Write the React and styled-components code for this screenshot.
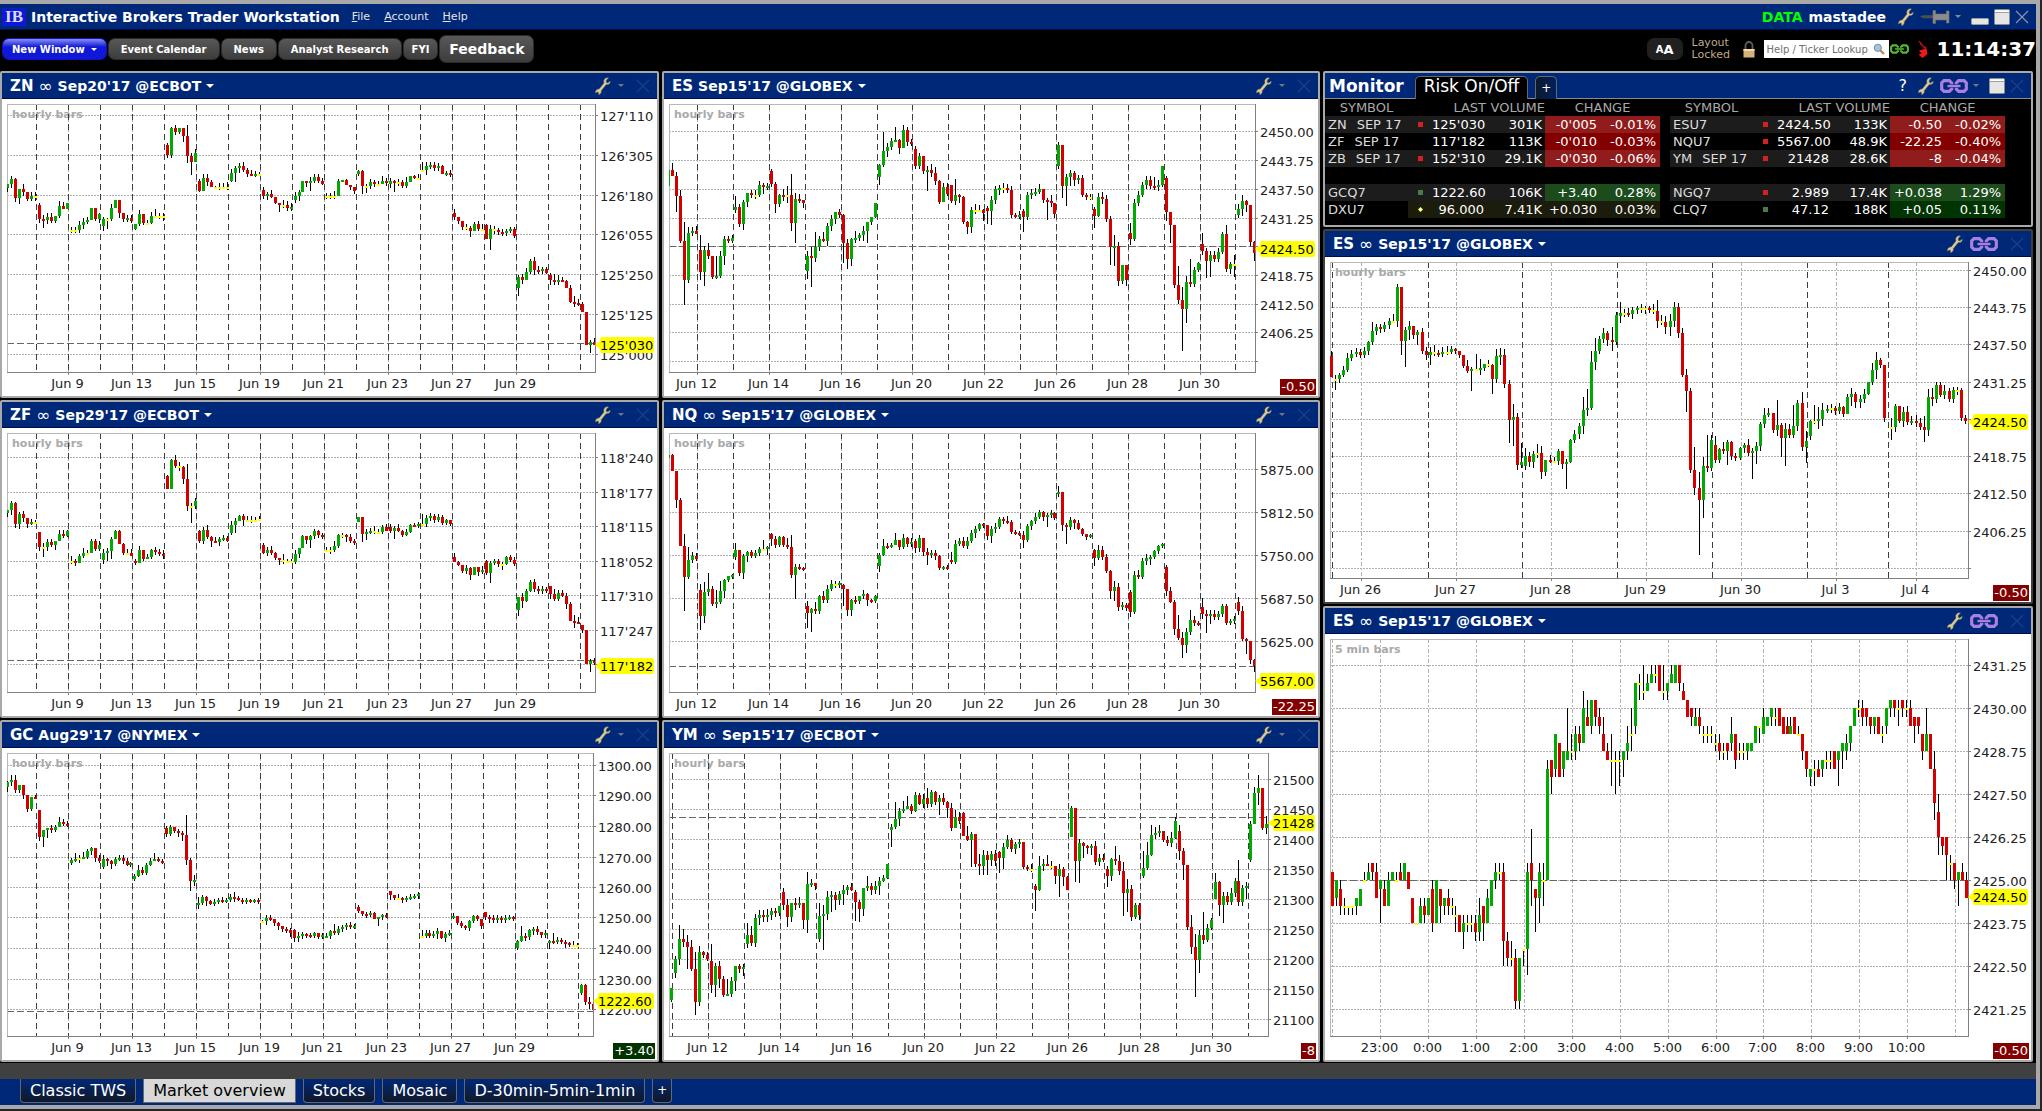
import React, { useLayoutEffect, useRef, useState } from 'react';
import styled, { createGlobalStyle, css } from 'styled-components';

const NAVY = '#002878';
const FRAME = '#a9a9a9';
const FONT = "'DejaVu Sans', Verdana, sans-serif";

const GlobalStyle = createGlobalStyle`
  * {
    box-sizing: border-box;
  }

  body {
    margin: 0;
    background: #262626;
    color: white;
    font-family: ${FONT};
    font-size: 13px;
  }

  button, input {
    font-family: inherit;
  }
`;

/* ---------- candle data ---------- */

// One string per session: the opening level, then "close.wicks" for each bar.
// Levels grow downwards; the two wick digits are upper and lower length.
const ZN = [
  '565 552.04 537.34 594.14 567.06 577.54 597.02 590.42 590.45',
  '615 657.24 662.48 652.44 663.42 648.02 618.52 629.40 610.00',
  '692 692.33 692.33 675.43 666.44 662.32 625.00 657.02 642.14',
  '680 658.25 658.1a 625.42 600.00 640.05 658.03 655.33 664.32',
  '688 674.01 642.42 670.02 670.32 650.41 650.72 648.33 650.35',
  '437 465.23 384.13 398.33 384.02 408.06 470.b7 486.3d 461.40',
  '543 575.21 535.40 547.44 562.20 562.12 562.43 562.42 564.52',
  '543 519.41 504.29 498.35 512.42 522.23 527.40 522.32 522.20',
  '570 590.33 583.24 592.41 610.01 616.07 616.53 626.43 622.43',
  '602 590.43 576.25 543.00 549.04 545.48 533.32 543.32 553.31',
  '588 588.33 590.33 588.53 545.20 542.00 555.10 562.03 575.03',
  '522 513.12 560.18 558.27 548.33 553.23 553.32 543.50 549.33',
  '553 543.34 549.19 548.33 558.22 547.52 528.00 534.11 534.42',
  '512 512.81 500.45 495.33 506.33 498.33 524.10 519.22 526.32',
  '640 652.43 664.03 682.03 684.32 695.26 673.20 687.32 689.50',
  '675 719.10 688.4b 690.34 697.23 700.33 694.23 688.22 710.22',
  '866 833.28 840.34 817.40 785.22 810.45 815.43 809.23 819.21',
  '825 840.25 847.63 840.53 844.31 865.10 907.31 911.64 914.42',
  '912 937.20 1035.00 1026.28 1035.40',
];

const ZF = [
  '400 390.04 370.25 434.14 402.25 414.34 433.04 426.31 427.22',
  '457 502.04 503.4a 487.34 497.32 485.05 462.40 468.42 453.11',
  '545 545.53 549.23 528.20 519.52 520.32 483.20 507.22 496.42',
  '540 520.44 514.38 477.28 455.10 493.10 519.12 520.42 528.40',
  '543 549.22 510.40 537.02 531.30 510.12 517.33 523.32 528.43',
  '290 327.10 240.10 260.52 261.44 298.15 378.f5 380.3h 364.33',
  '453 483.12 450.33 473.52 483.16 488.41 478.24 474.32 485.21',
  '460 435.42 423.38 408.10 420.26 421.40 422.43 420.31 418.31',
  '497 519.21 511.33 519.42 536.12 541.05 543.63 543.21 543.22',
  '547 522.42 505.04 468.10 480.04 469.18 455.23 465.13 472.22',
  '512 512.32 512.34 500.52 465.12 467.23 473.15 483.32 489.22',
  '428 411.00 463.08 457.36 454.32 456.52 457.32 442.22 455.30',
  '442 453.32 444.28 454.41 467.12 456.31 437.11 440.21 433.22',
  '433 433.a2 415.33 410.33 421.23 411.32 430.22 421.12 432.02',
  '532 547.40 556.11 574.02 564.33 586.15 562.00 577.04 570.42',
  '543 580.12 551.2a 544.22 553.23 553.26 532.11 540.22 553.32',
  '690 652.06 663.47 635.21 608.21 629.33 633.33 628.33 633.22',
  '618 643.05 659.52 640.32 649.31 672.35 725.20 728.66 731.51',
  '735 752.03 852.00 844.28 850.32',
];

const GC = [
  '215 200.15 195.54 225.53 209.03 240.04 282.03 246.02 251.20',
  '285 366.04 345.0a 340.08 345.33 336.22 320.50 326.33 333.31',
  '444 436.22 432.62 430.34 426.51 410.22 399.14 430.04 438.32',
  '457 432.42 440.15 447.15 434.22 430.32 439.33 452.31 445.12',
  '492 483.22 465.51 474.32 452.22 438.31 434.60 440.21 443.22',
  '340 357.23 336.22 348.02 354.24 360.26 435.k5 500.2a 495.55',
  '570 564.64 548.22 558.15 567.11 562.32 555.22 560.32 555.22',
  '555 546.32 551.54 556.21 561.22 556.22 560.12 555.12 563.22',
  '618 618.11 609.34 614.32 625.03 634.14 642.03 646.23 655.24',
  '645 669.14 664.44 657.23 662.13 665.22 655.12 667.02 661.22',
  '671 665.30 648.13 654.72 643.32 638.23 632.23 637.32 633.22',
  '578 590.22 597.02 601.23 595.22 614.10 607.07 601.13 606.21',
  '528 540.05 550.02 551.42 555.13 551.22 548.32 544.22 538.23',
  '665 665.61 655.32 664.32 659.32 648.35 671.01 658.24 655.32',
  '609 603.31 624.02 635.22 641.12 620.13 603.12 613.12 633.03',
  '592 607.03 611.25 615.33 610.33 616.23 611.33 606.22 614.12',
  '700 678.12 664.a1 668.34 647.13 643.25 653.33 660.03 654.33',
  '685 678.16 682.82 676.32 681.22 685.25 692.12 690.42 691.20',
  '837 813.12 863.13 868.55 887.25',
];

const ES = [
  '380 330.00 350.70 408.4g 543.62 660.jp 521.63 514.43 522.50',
  '570 638.f8 570.4e 590.73 653.02 650.k2 588.52 538.39 543.32 535.32',
  '450 441.b3 492.33 427.26 400.05 405.33 405.54 377.42 381.27 378.33',
  '333 374.23 432.29 405.13 409.65 407.97 490.l8 417.6k 420.53 429.05',
  '635 590.58 596.9t 563.f4 537.34 545.71 500.35 477.45 457.05 467.33',
  '465 550.1k 597.4a 537.17 534.74 525.23 515.56 487.0c 472.03 430.01',
  '353 315.18 273.j2 262.46 243.33 240.d1 265.16 211.50 248.34 253.32',
  '267 319.33 288.33 335.03 331.4k 339.64 364.64 428.12 382.40 404.42',
  '377 425.02 405.g4 412.16 486.12 501.17 450.36 450.64 451.52 459.18',
  '444 453.2d 420.4e 388.34 384.36 386.55 391.43 465.43 472.21 466.42',
  '453 471.2f 405.33 400.44 396.43 388.52 421.03 424.2j 430.64 464.04',
  '320 257.33 380.0c 352.3k 341.39 360.26 356.34 405.32 411.23 412.33',
  '447 468.2c 413.41 418.55 478.43 563.3i 558.bj 665.45 617.03 660.06',
  '520 538.a6 430.42 405.43 375.32 360.44 378.43 382.93 377.54 319.02',
  '355 456.29 495.0i 677.03 721.j4 748.dG 667.6e 674.n3 630.33 610.12',
  '552 574.b4 605.3h 585.4g 597.43 578.43 522.22 627.93 612.25 612.9d',
  '467 447.53 423.67 435.17 548.04 580.18',
];

const NQ = [
  '190 180.00 230.10 315.08 455.20 548.cy 495.d2 485.43 493.32',
  '587 663.6e 593.a7 583.g4 627.32 622.c4 588.a2 557.17 543.02 540.13',
  '488 465.73 536.03 485.26 472.16 483.22 475.32 462.23 463.91 458.16',
  '417 432.17 450.33 427.12 450.12 457.72 542.c3 517.3o 520.32 525.11',
  '635 654.5f 642.1j 648.73 605.13 615.53 583.43 568.42 570.33 565.23',
  '572 583.1h 647.06 615.16 620.43 603.03 597.43 615.16 620.12 603.12',
  '513 480.26 453.71 458.32 450.21 435.70 457.03 430.42 448.13 441.43',
  '440 459.25 431.34 473.04 480.4a 475.33 484.34 521.12 516.12 522.21',
  '495 501.82 447.42 438.32 453.42 440.43 416.32 404.35 388.12 395.12',
  '390 423.04 403.37 398.44 372.22 378.23 382.52 412.22 416.22 419.22',
  '421 435.48 395.22 378.14 367.43 353.22 368.14 362.2a 354.33 370.12',
  '297 291.63 390.06 396.2h 375.33 384.16 402.31 419.12 427.03 421.11',
  '465 491.18 465.52 487.43 530.32 588.18 577.6a 636.44 632.33 640.23',
  '593 652.25 540.42 546.52 500.32 491.44 486.27 470.12 454.13 447.12',
  '518 590.25 622.41 703.26 731.e2 752.6d 713.48 675.a3 684.43 690.21',
  '638 658.95 663.4h 657.48 667.43 657.33 635.23 686.22 679.22 673.33',
  '622 649.54 733.52 740.1d 797.04 815.16',
];

const YM = [
  '857 820.02',
  '777 732.35 672.e6 682.a5 698.7m 765.72 863.id 712.64 720.13 732.32',
  '740 812.h8 755.3c 795.59 843.32 838.f1 801.43 756.0a 764.34 759.47',
  '687 662.c4 685.93 609.44 600.57 606.55 600.65 588.35 594.34 574.03',
  '532 570.45 608.6a 566.05 572.55 564.63 615.09 508.cd 504.43 513.04',
  '672 603.d3 597.9y 546.66 540.4f 556.3a 538.35 527.5b 516.25 525.41',
  '533 562.2j 582.2d 519.07 515.a3 527.35 514.54 498.49 489.31 447.01',
  '347 338.3h 312.h2 288.37 283.82 273.a0 288.23 239.31 267.21 253.54',
  '250 267.a4 230.23 261.13 248.3d 261.53 278.1a 340.53 306.70 318.53',
  '293 363.10 377.a1 357.2r 447.03 455.a9 420.59 436.4f 418.36 440.45',
  '412 429.1f 397.4b 375.52 404.23 389.25 383.34 458.02 464.22 464.53',
  '515 525.2l 455.a1 449.55 455.90 454.53 483.08 463.5l 486.29 527.10',
  '368 280.20 440.0l 384.4m 394.1c 399.16 394.27 443.53 431.44 436.42',
  '462 483.3b 432.15 438.d4 470.64 534.9n 522.aj 608.44 570.22 600.25',
  '485 459.h2 420.d2 362.a1 356.64 350.64 377.02 384.43 370.64 318.41',
  '348 410.69 450.3f 636.03 697.c7 737.dB 660.5d 677.n4 640.42 615.22',
  '552 501.90 570.1b 544.4i 562.43 535.53 498.34 563.l4 520.34 515.4b',
  '435 326.32 233.60 220.dc 340.02 327.86',
];

const ES_HOURLY = [
  '395 458.50',
  '462 462.4b 450.24 435.42 399.52 387.43 381.43 390.33 378.43 352.14 318.93 307.34 312.34 300.33 289.34 289.72 188.36 350.0e 315.3q 305.5a 330.04 322.2a 380.43 390.45',
  '390 382.5a 384.73 389.33 381.53 382.63 373.32 378.13 392.03 425.02 440.62 433.2k 435.f1 430.95 419.03 421.42 463.1f 395.74 392.79 477.64 587.4n 578.dq 722.45 712.j3',
  '725 695.84 713.45 687.36 686.94 743.77 705.04 708.52 708.42 678.24 717.05 713.3p 645.11 627.43 605.35 555.d8 550.j6 413.b2 380.d8 343.33 325.54 346.26 351.d9 272.33',
  '275 266.b7 264.44 267.53 257.35 250.24 252.44 250.25 257.23 259.63 290.b7 292.63 307.67 290.79 248.56 326.45 450.52 500.6l 735.33 790.n7 825.gT 723.9i 731.v4 645.53',
  '660 705.93 672.13 679.73 651.2e 695.14 701.33 669.12 660.25 684.63 679.3q 663.4d 597.25 570.74 564.52 616.03 601.p6 641.2j 613.6s 631.53 605.l3 534.35 668.b4 650.ag',
  '635 590.14 588.g3 583.c8 557.77 553.43 551.44 560.24 547.43 568.13 517.30 508.69 532.26 523.46 507.54 471.01 435.73 405.89 422.23 580.04',
  '608 608.9d 543.25 588.02 562.56 592.63 588.53 594.64 608.53 617.bc 517.86 522.97 480.34 512.32 498.64 524.33 495.34 496.35 581.23 590.33',
];

// open / close / high / low of every 5 minute bar, one digit each,
// counted in ticks down from 2431.25
const ES_5MIN = `
osos rpps qspt ssrt ssst ssst srrt sqqs ppop ponp nonp ornr qppu qsps spos poop
ppop opnp pnnp oqoq ruru uuuu usru stru trrt qupv uppu qsqu srrt rsqt ssrt ttsv
tvtv vutx uutv uutv uvtw vtrw susw urqu spps ponq oonp ownz wyvz yywz yDxE DyyE
xxxz xonA npjs qrqv ronu ppns pcbp bdbf c88d 9d9d caad ba5b aa8b a87b 897a 9539
6747 7448 4647 6758 8a6a ab9b bb8e bbaf bbae baad a97b 885a 7228 2214 3304 3213
2102 1102 0303 3304 3224 2102 2002 0203 3424 4646 5657 7657 6758 8879 8879 8879
998a 9a8b aa9b 9a9b 986a 8b8c aa9b aa9b a99b a99a 9779 7779 8658 7667 6557 6657
5757 6868 7868 8768 6868 8878 8a8b acad dcce ccbe cdbd cbbd bbac bbac acac baae
a99c a98b 977a 7557 5546 5647 5657 6768 7668 6868 8879 7558 5446 4546 5547 4546
5546 5747 6769 6768 8a8b a85a 8c8c cgai hkfm klkm kmkp nnmp npnq poos opnp prop
`;

const DIGITS = '0123456789abcdefghijklmnopqrstuvwxyzABCDEFGHIJKLMNOPQRSTUVWXYZ';
const digit = (c) => DIGITS.indexOf(c);

const readSessions = (sessions, first, lines, step) =>
  sessions.flatMap((session, i) => {
    const [start, ...bars] = session.split(' ');
    const x0 = i === 0 ? first : lines[i - 1] + step / 2;
    let open = Number(start);
    return bars.map((bar, k) => {
      const [value, wicks] = bar.split('.');
      const close = Number(value);
      const candle = {
        x: x0 + k * step,
        open,
        close,
        high: Math.min(open, close) - digit(wicks[0]) * 3,
        low: Math.max(open, close) + digit(wicks[1]) * 3,
      };
      open = close;
      return candle;
    });
  });

const readTicks = (text, first, step) =>
  text
    .trim()
    .split(/\s+/)
    .map((bar, i) => {
      const [open, close, high, low] = [...bar].map((c) => 197 + digit(c) * 25.8);
      return { x: first + i * step, open, close, high, low };
    });

const series = (from, step, count) =>
  Array.from({ length: count }, (_, i) => from + i * step);

const ticks = (positions, names) => positions.map((at, i) => [at, names[i] || '']);

const notes = series(69, 73.8, 18);
const indexes = series(66, 82.8, 16);
const ymLines = series(9, 83, 17);
const hourly = [6, 210, 413, 617, 820, 1024, 1197];
const JUNE_A = ['Jun 9', 'Jun 13', 'Jun 15', 'Jun 19', 'Jun 21', 'Jun 23', 'Jun 27', 'Jun 29'];
const JUNE_B = ['Jun 12', 'Jun 14', 'Jun 16', 'Jun 20', 'Jun 22', 'Jun 26', 'Jun 28', 'Jun 30'];

const CHARTS = {
  zn: {
    symbol: 'ZN', rolling: true, contract: "Sep20'17 @ECBOT", bars: 'hourly bars', axis: 62,
    width: 1358, top: 313, bottom: 1117, lines: notes,
    candles: readSessions(ZN, 0, notes, 9.22),
    xTicks: ticks(series(142.8, 147.6, 8), JUNE_A),
    yTicks: ticks([347, 466, 586, 704, 823, 943, 1063], ["127'110", "126'305", "126'180", "126'055", "125'250", "125'125", "125'000"]),
    previous: 1031, last: 1035, price: "125'030",
  },
  zf: {
    symbol: 'ZF', rolling: true, contract: "Sep29'17 @ECBOT", bars: 'hourly bars', axis: 62,
    width: 1358, top: 160, bottom: 937, lines: notes,
    candles: readSessions(ZF, 0, notes, 9.22),
    xTicks: ticks(series(142.8, 147.6, 8), JUNE_A),
    yTicks: ticks([233, 337, 440, 544, 646, 751, 853], ["118'240", "118'177", "118'115", "118'052", "117'310", "117'247"]),
    previous: 842, last: 858, price: "117'182",
  },
  gc: {
    symbol: 'GC', contract: "Aug29'17 @NYMEX", bars: 'hourly bars', axis: 64, change: '+3.40',
    width: 1356, top: 114, bottom: 965, lines: notes,
    candles: readSessions(GC, 0, notes, 9.22),
    xTicks: ticks(series(142.8, 147.6, 8), JUNE_A),
    yTicks: ticks([151, 242, 335, 427, 518, 610, 701, 794, 886], ['1300.00', '1290.00', '1280.00', '1270.00', '1260.00', '1250.00', '1240.00', '1230.00', '1220.00']),
    previous: 892, last: 860, price: '1222.60',
  },
  es: {
    symbol: 'ES', contract: "Sep15'17 @GLOBEX", bars: 'hourly bars', axis: 63, change: '-0.50',
    width: 1352, top: 133, bottom: 937, lines: indexes,
    candles: readSessions(ES, -2, indexes, 9.2),
    xTicks: ticks(series(66, 165.6, 8), JUNE_B),
    yTicks: ticks([214, 301, 388, 475, 560, 646, 733, 818, 905], ['2450.00', '2443.75', '2437.50', '2431.25', '', '2418.75', '2412.50', '2406.25']),
    previous: 560, last: 567, price: '2424.50',
  },
  nq: {
    symbol: 'NQ', rolling: true, contract: "Sep15'17 @GLOBEX", bars: 'hourly bars', axis: 63, change: '-22.25',
    width: 1352, top: 115, bottom: 892, lines: indexes,
    candles: readSessions(NQ, -2, indexes, 9.2),
    xTicks: ticks(series(66, 165.6, 8), JUNE_B),
    yTicks: ticks([223, 352, 481, 610, 739], ['5875.00', '5812.50', '5750.00', '5687.50', '5625.00']),
    previous: 815, last: 860, price: '5567.00',
  },
  ym: {
    symbol: 'YM', rolling: true, contract: "Sep15'17 @ECBOT", bars: 'hourly bars', axis: 50, change: '-8',
    width: 1382, top: 114, bottom: 965, lines: ymLines,
    candles: readSessions(YM, 5, ymLines, 9.22),
    xTicks: ticks(series(92, 166, 8), JUNE_B),
    yTicks: ticks([193, 283, 374, 464, 554, 644, 734, 826, 916], ['21500', '21450', '21400', '21350', '21300', '21250', '21200', '21150', '21100']),
    previous: 307, last: 324, price: '21428',
  },
  esHourly: {
    symbol: 'ES', rolling: true, contract: "Sep15'17 @GLOBEX", bars: 'hourly bars', axis: 63, change: '-0.50', linked: true,
    width: 1367, top: 112, bottom: 1060, lines: hourly,
    candles: readSessions(ES_HOURLY, 2, hourly, 8.85),
    xTicks: ticks([68, 272, 475, 679, 882, 1086, 1257], ['Jun 26', 'Jun 27', 'Jun 28', 'Jun 29', 'Jun 30', 'Jul 3', 'Jul 4']),
    yTicks: ticks([136, 247, 358, 472, 583, 694, 806, 919, 1030], ['2450.00', '2443.75', '2437.50', '2431.25', '', '2418.75', '2412.50', '2406.25']),
    last: 592, price: '2424.50',
  },
  esMinutes: {
    symbol: 'ES', rolling: true, contract: "Sep15'17 @GLOBEX", bars: '5 min bars', axis: 63, change: '-0.50', linked: true,
    width: 1367, top: 118, bottom: 1309, lines: [],
    candles: readTicks(ES_5MIN, 4, 8.545),
    xTicks: [[6, ''], ...ticks(series(109, 102.6, 13), ['23:00', '0:00', '1:00', '2:00', '3:00', '4:00', '5:00', '6:00', '7:00', '8:00', '9:00', '10:00'])],
    yTicks: ticks(series(197, 128.9, 9), ['2431.25', '2430.00', '2428.75', '2427.50', '2426.25', '2425.00', '2423.75', '2422.50', '2421.25']),
    previous: 842, last: 893, price: '2424.50',
  },
};

/* ---------- icons ---------- */

const WrenchIcon = () => (
  <svg width="18" height="18" viewBox="0 0 18 18" aria-hidden="true">
    <path
      d="M16.2 4.200 13.600 6 12.100 5.200 12.300 3.200 14.500.9C12.200.3 10.200 1.600 9.800 3.600c-.2 1 0 1.800.2 2.500L5.200 12c-1.700-.2-3.300.9-3.700 2.700l-.2 1.300 2-1.100 1.400.8-.1 2c1.900-.5 3.100-2.200 2.600-4l5-6.100c2.500.2 4.300-1.200 4-3.400z"
      fill="#dccb95"
      stroke="#6f6b5d"
      strokeWidth="0.5"
    />
  </svg>
);

const ChainIcon = ({ color = '#a77fe0', width = 28, height = 14 }) => (
  <svg width={width} height={height} viewBox="0 0 30 15" fill="none" stroke={color} aria-hidden="true">
    <path d="M12.500 5.500V4.200L10 1.800H4.200L1.800 4.200v6.600L4.200 13.200H10l2.500-2.400V9.500M17.500 5.500V4.200L20 1.800h5.800L28.200 4.200v6.600L25.800 13.200H20l-2.500-2.400V9.500" strokeWidth="3.400" />
    <path d="M8 7.500h14" strokeWidth="2.600" />
  </svg>
);

const CrossIcon = () => (
  <svg width="14" height="14" viewBox="0 0 14 14" aria-hidden="true">
    <path d="M1 1 13 13M13 1 1 13" stroke="currentColor" strokeWidth="1.200" />
  </svg>
);

const WindowIcon = () => (
  <svg width="16" height="16" viewBox="0 0 16 16" aria-hidden="true">
    <rect x="0.500" y="0.500" width="15" height="15" rx="1" fill="#e6e6e6" stroke="#8b8b8b" />
    <path d="M1 1.500h14v1.500H1z" fill="#fff" />
    <path d="M1 3.500h14" stroke="#a0a0a0" />
  </svg>
);

const MinimizeIcon = () => (
  <svg width="18" height="16" viewBox="0 0 18 16" aria-hidden="true">
    <rect x="0.500" y="9.500" width="17" height="6" rx="1" fill="#e6e6e6" stroke="#9a9a9a" />
  </svg>
);

const PinIcon = () => (
  <svg width="30" height="14" viewBox="0 0 30 14" aria-hidden="true">
    <path d="M0 6.500 3 5.300h10v3H3z" fill="#4f4f4f" />
    <path d="M13 .5h2.500V4h11V1H29v12h-2.500v-3h-11v3.500H13z" fill="#8b8b8b" stroke="#707070" strokeWidth="0.600" />
  </svg>
);

const LockIcon = () => (
  <svg width="12" height="17" viewBox="0 0 12 17" aria-hidden="true">
    <path d="M2.500 8V4.500a3.500 3.500 0 0 1 7 0V8" fill="none" stroke="#5f5f5f" strokeWidth="1.800" />
    <path d="M.5 8h11v8.500H.5z" fill="#d5b17c" />
    <path d="M.5 8h11v2H.5z" fill="#f0d9ae" />
  </svg>
);

const SearchIcon = () => (
  <svg width="12" height="12" viewBox="0 0 12 12" aria-hidden="true">
    <path d="m7 7 4 4" stroke="#b98b5a" strokeWidth="2.400" />
    <circle cx="4.800" cy="4.800" r="3.600" fill="#9cc4e4" stroke="#7a8b99" />
  </svg>
);

const PointerIcon = () => (
  <svg width="10" height="19" viewBox="0 0 10 19" aria-hidden="true">
    <path d="M1 1 7.500 9M2 4l6.500 4" stroke="#b01010" strokeWidth="1.300" />
    <path d="M1 10.500 8.500 8.500 9.500 14 4.500 18 .5 14.500l3-1z" fill="#f01818" />
  </svg>
);

/* ---------- shared parts ---------- */

const Caret = styled.span`
  width: 0;
  height: 0;
  border: ${(props) => props.size || 4}px solid transparent;
  border-top-color: ${(props) => props.color || 'white'};
  border-bottom-width: 0;
`;

const IconButton = styled.button`
  display: flex;
  align-items: center;
  margin-left: ${(props) => (props.apart ? 6 : 0)}px;
  padding: 0;
  border: 0;
  background: none;
  color: ${(props) => props.color || 'white'};
  font-size: 16px;
`;

const Panel = styled.section`
  display: flex;
  flex-direction: column;
  min-width: 0;
  min-height: 0;
  border: 2px solid ${(props) => (props.active ? '#404040' : FRAME)};
  border-radius: 2px;
  background: ${(props) => props.background || 'white'};
`;

const PanelHeader = styled.header`
  display: flex;
  flex: none;
  align-items: center;
  justify-content: space-between;
  height: 26px;
  padding: 0 7px 0 ${(props) => (props.flush ? 4 : 8)}px;
  border-bottom: 1px solid ${(props) => (props.flush ? '#8b8b8b' : '#000a50')};
  background: ${NAVY};
`;

const ContractButton = styled.button`
  display: flex;
  align-items: center;
  gap: 5px;
  padding: 0;
  border: 0;
  background: none;
  color: white;
  font-size: 14px;
  font-weight: bold;
  line-height: 20px;
  white-space: nowrap;

  b {
    font-size: 15px;
  }

  span.rolling {
    font-size: 17px;
    font-weight: normal;
  }
`;

const HeaderTools = styled.div`
  display: flex;
  align-items: center;
  gap: ${(props) => props.gap || 6}px;
`;

/* ---------- chart ---------- */

const ChartArea = styled.div`
  position: relative;
  flex: 1 1 0;
  min-height: 0;
  overflow: hidden;

  svg {
    display: block;
  }

  text {
    font-family: ${FONT};
    font-size: 13px;
  }

  .bars {
    font-size: 11px;
    font-weight: bold;
  }
`;

const ChangeBadge = styled.output`
  position: absolute;
  right: 2px;
  bottom: 1px;
  padding: 0 1px;
  background: ${(props) => (props.up ? '#003300' : '#820000')};
  line-height: 16px;
`;

const PAD = { left: 5, top: 5, bottom: 24 };

const Candles = ({ candles, x, y }) => {
  const paths = { wick: '', up: '', down: '', flat: '' };

  candles.forEach((c) => {
    const cx = Math.round(x(c.x));
    const top = Math.round(y(Math.min(c.open, c.close)));
    const bottom = Math.round(y(Math.max(c.open, c.close)));
    const high = Math.round(y(c.high));
    const low = Math.round(y(c.low));
    const flat = Math.abs(c.open - c.close) <= 2;
    const kind = flat ? 'flat' : c.close < c.open ? 'up' : 'down';

    paths.wick += `M${cx} ${high}h1V${low}h-1z`;
    paths[kind] += `M${cx - 1} ${top}h3v${Math.max(2, bottom - top)}h-3z`;
  });

  return (
    <g>
      <path d={paths.wick} fill="#000" />
      <path d={paths.up} fill="#00aa00" />
      <path d={paths.down} fill="#d40000" />
      <path d={paths.flat} fill="#ffff00" />
    </g>
  );
};

const Chart = ({ chart }) => {
  const area = useRef(null);
  const [size, setSize] = useState({ width: 0, height: 0 });

  useLayoutEffect(() => {
    const measure = () =>
      setSize({ width: area.current.clientWidth, height: area.current.clientHeight });
    measure();
    const observer = new ResizeObserver(measure);
    observer.observe(area.current);
    return () => observer.disconnect();
  }, []);

  const left = PAD.left;
  const top = PAD.top;
  const right = Math.max(left, size.width - chart.axis);
  const bottom = Math.max(top, size.height - PAD.bottom);
  const x = (value) => left + (value / chart.width) * (right - left);
  const y = (value) =>
    top + ((value - chart.top) / (chart.bottom - chart.top)) * (bottom - top);
  const lineX = (value) => Math.floor(x(value)) + 0.5;
  const lineY = (value) => Math.floor(y(value)) + 0.5;
  const clip = `${chart.symbol}${chart.width}${chart.top}`;
  const tagY = Math.round(y(chart.last));
  const tagWidth = chart.axis - 8;

  return (
    <ChartArea ref={area}>
      <svg width={size.width} height={size.height} shapeRendering="crispEdges">
        <clipPath id={clip}>
          <rect x={left} y={top} width={right - left} height={bottom - top} />
        </clipPath>
        <text className="bars" x={left + 5} y={top + 14} fill="#a9a9a9">
          {chart.bars}
        </text>

        <g stroke="#b0b0b0">
          {chart.yTicks.map(([at]) => (
            <path key={at} d={`M${left} ${lineY(at)}H${right}`} strokeDasharray="2 1" />
          ))}
          {chart.xTicks.map(([at]) => (
            <path key={at} d={`M${lineX(at)} ${top}V${bottom}`} strokeDasharray="4 2 2 2" />
          ))}
        </g>
        <g stroke="#3c3c3c">
          {chart.lines.map((at) => (
            <path key={at} d={`M${lineX(at)} ${top}V${bottom}`} strokeDasharray="6 4" />
          ))}
        </g>
        {chart.previous && (
          <path
            d={`M${left} ${lineY(chart.previous)}H${right}`}
            stroke="#666"
            strokeDasharray="7 3"
          />
        )}

        <path d={`M${left + 0.5} ${bottom}V${top + 0.5}H${right}`} fill="none" stroke="#b8b8b8" />
        <path
          d={`M${left} ${bottom + 0.5}H${right + 0.5}V${top}`}
          fill="none"
          stroke="#808080"
        />

        <g clipPath={`url(#${clip})`}>
          <Candles candles={chart.candles} x={x} y={y} />
        </g>

        {chart.yTicks.map(([at, name]) => (
          <g key={at}>
            <path d={`M${right} ${lineY(at)}h3`} stroke="#808080" />
            <text x={right + 5} y={lineY(at) + 5} fill="#222">
              {name}
            </text>
          </g>
        ))}
        {chart.xTicks.map(([at, name]) => (
          <g key={at}>
            {name && <path d={`M${lineX(at)} ${bottom}v3`} stroke="#808080" />}
            <text x={lineX(at) - 1} y={bottom + 16} textAnchor="middle" fill="#222">
              {name}
            </text>
          </g>
        ))}

        <path
          d={`M${right} ${tagY}l5 -4v-2q0 -2 2 -2h${tagWidth - 4}q2 0 2 2v12q0 2 -2 2h-${tagWidth - 4}q-2 0 -2 -2v-2z`}
          fill="#ffff00"
          shapeRendering="auto"
        />
        <text x={right + 5} y={tagY + 5} fill="#000">
          {chart.price}
        </text>
      </svg>
      {chart.change && <ChangeBadge up={chart.change[0] === '+' ? 1 : 0}>{chart.change}</ChangeBadge>}
    </ChartArea>
  );
};

const ChartPanel = ({ chart, active }) => (
  <Panel active={active ? 1 : 0}>
    <PanelHeader>
      <ContractButton>
        <b>{chart.symbol}</b>
        {chart.rolling && <span className="rolling">∞</span>}
        {chart.contract}
        <Caret />
      </ContractButton>
      <HeaderTools>
        <IconButton aria-label="Settings">
          <WrenchIcon />
        </IconButton>
        {chart.linked ? (
          <IconButton aria-label="Linked">
            <ChainIcon />
          </IconButton>
        ) : (
          <Caret size={3} color="#707888" />
        )}
        <IconButton aria-label="Close" color="#1c3f86" apart={1}>
          <CrossIcon />
        </IconButton>
      </HeaderTools>
    </PanelHeader>
    <Chart chart={chart} />
  </Panel>
);

/* ---------- monitor ---------- */

const MonitorTabs = styled.div`
  display: flex;
  align-items: flex-end;
  align-self: stretch;
  gap: 7px;

  h2 {
    margin: 0 4px 0 0;
    align-self: center;
    font-size: 17px;
    line-height: 24px;
  }
`;

const MonitorTab = styled.button`
  height: 23px;
  margin-bottom: -1px;
  padding: 0 ${(props) => (props.add ? 5 : 8)}px;
  border: 1px solid #686868;
  border-bottom: 0;
  border-radius: 5px 5px 0 0;
  background: ${(props) => (props.add ? 'linear-gradient(90deg, #101828, #002060)' : 'black')};
  color: white;
  font-size: ${(props) => (props.add ? 12 : 17)}px;
  line-height: 18px;
  ${(props) => !props.add && 'padding-bottom: 4px;'}
`;

const QuoteTable = styled.table`
  width: 100%;
  margin-bottom: 7px;
  border-collapse: collapse;
  table-layout: fixed;
  font-size: 13px;

  th {
    height: 17px;
    padding: 0;
    color: #a9a9a9;
    font-weight: normal;
    line-height: 17px;
    text-align: right;
    white-space: nowrap;
  }

  th[scope='colgroup'],
  th:nth-child(5n + 1) {
    text-align: center;
  }
`;

const Quote = styled.td`
  height: 17px;
  padding: 0 ${(props) => props.end || 3}px 0 0;
  background: ${(props) => props.fill || 'transparent'};
  line-height: 17px;
  text-align: right;
  white-space: nowrap;

  ${(props) =>
    props.left &&
    css`
      padding: 0 0 0 3px;
      text-align: left;
      color: #dcdcdc;
    `}

  span {
    margin-left: 10px;
  }
`;

const Marker = styled.i`
  display: block;
  width: 5px;
  height: 5px;
  margin-left: 10px;
  background: ${(props) => props.color};
  ${(props) => props.diamond && 'clip-path: polygon(50% 0, 100% 50%, 50% 100%, 0 50%);'}
`;

const RED = '#d42020';
const GREEN = '#4a7a4a';

const QUOTES = [
  [
    ['ZN', 'SEP 17', RED, "125'030", '301K', "-0'005", '-0.01%'],
    ['ESU7', '', RED, '2424.50', '133K', '-0.50', '-0.02%'],
  ],
  [
    ['ZF', 'SEP 17', '', "117'182", '113K', "-0'010", '-0.03%'],
    ['NQU7', '', RED, '5567.00', '48.9K', '-22.25', '-0.40%'],
  ],
  [
    ['ZB', 'SEP 17', RED, "152'310", '29.1K', "-0'030", '-0.06%'],
    ['YM', 'SEP 17', RED, '21428', '28.6K', '-8', '-0.04%'],
  ],
  null,
  [
    ['GCQ7', '', GREEN, '1222.60', '106K', '+3.40', '0.28%'],
    ['NGQ7', '', RED, '2.989', '17.4K', '+0.038', '1.29%'],
  ],
  [
    ['DXU7', '', '#ffff80', '96.000', '7.41K', '+0.030', '0.03%'],
    ['CLQ7', '', GREEN, '47.12', '188K', '+0.05', '0.11%'],
  ],
];

const QuoteCells = ({ quote, striped }) => {
  const [symbol, expiry, marker, last, volume, change, percent] = quote;
  const muted = symbol === 'DXU7';
  const fill = muted ? '#1c1c0c' : striped ? '#1c1c1c' : undefined;
  const down = striped ? '#901c1c' : '#820000';
  const up = striped ? '#1c4c1c' : '#003400';
  const tone = muted ? fill : change[0] === '-' ? down : up;

  return (
    <>
      <Quote left fill={muted ? undefined : fill}>
        {symbol}
        {expiry && <span>{expiry}</span>}
      </Quote>
      <Quote fill={fill}>{marker && <Marker color={marker} diamond={muted ? 1 : 0} />}</Quote>
      <Quote fill={fill} end={2}>{last}</Quote>
      <Quote fill={fill}>{volume}</Quote>
      <Quote fill={tone}>{change}</Quote>
      <Quote fill={tone} end={4}>{percent}</Quote>
    </>
  );
};

const QuoteColumns = () => (
  <>
    <col width="83" />
    <col width="24" />
    <col width="54" />
    <col width="59" />
    <col width="55" />
    <col width="60" />
  </>
);

const QuoteHeadings = () => (
  <>
    <th>SYMBOL</th>
    <th colSpan={2}>LAST</th>
    <th>VOLUME</th>
    <th colSpan={2} scope="colgroup">CHANGE</th>
  </>
);

const Monitor = () => (
  <Panel background="black">
    <PanelHeader flush>
      <MonitorTabs>
        <h2>Monitor</h2>
        <MonitorTab>Risk On/Off</MonitorTab>
        <MonitorTab add={1}>+</MonitorTab>
      </MonitorTabs>
      <HeaderTools gap={5}>
        <IconButton aria-label="Help">?</IconButton>
        <span />
        <IconButton aria-label="Settings">
          <WrenchIcon />
        </IconButton>
        <IconButton aria-label="Linked">
          <ChainIcon />
        </IconButton>
        <Caret size={3} color="#707888" />
        <span />
        <IconButton aria-label="Restore">
          <WindowIcon />
        </IconButton>
        <IconButton aria-label="Close" color="#1c3f86">
          <CrossIcon />
        </IconButton>
      </HeaderTools>
    </PanelHeader>
    <QuoteTable>
      <colgroup>
        <QuoteColumns />
        <col width="10" />
        <QuoteColumns />
        <col />
      </colgroup>
      <thead>
        <tr>
          <QuoteHeadings />
          <th />
          <QuoteHeadings />
          <th />
        </tr>
      </thead>
      <tbody>
        {QUOTES.map((row, i) => (
          <tr key={i}>
            {row ? (
              <>
                <QuoteCells quote={row[0]} striped={i % 2 === 0} />
                <td />
                <QuoteCells quote={row[1]} striped={i % 2 === 0} />
                <td />
              </>
            ) : (
              <Quote colSpan={14} />
            )}
          </tr>
        ))}
      </tbody>
    </QuoteTable>
  </Panel>
);

/* ---------- window ---------- */

const Page = styled.div`
  display: flex;
  flex-direction: column;
  min-height: 100vh;
  padding: 0 2px 2px 0;
`;

const Frame = styled.div`
  display: flex;
  flex: 1;
  flex-direction: column;
  border: 4px solid ${FRAME};
  border-left: 0;
  background: black;
`;

const TitleBar = styled.header`
  display: flex;
  align-items: center;
  justify-content: space-between;
  height: 26px;
  padding: 0 7px 0 2px;
  border-bottom: 1px solid #001050;
  background: ${NAVY};
`;

const Brand = styled.div`
  display: flex;
  align-items: center;

  h1 {
    margin: 0 5px 0 5px;
    font-size: 14px;
  }
`;

const Logo = styled.span`
  width: 24px;
  height: 18px;
  background: #1018d8;
  color: #d8dcf4;
  font: bold 17px/18px 'Liberation Serif', serif;
  text-align: center;
`;

const MenuButton = styled.button`
  padding: 0 7px;
  border: 0;
  background: none;
  color: #e4e4e4;
  font-size: 11px;

  &::first-letter {
    text-decoration: underline;
  }
`;

const User = styled.span`
  margin-right: 6px;
  font-size: 14px;
  font-weight: bold;

  em {
    margin-right: 6px;
    color: #00ff00;
    font-style: normal;
  }
`;

const Toolbar = styled.div`
  display: flex;
  align-items: center;
  justify-content: space-between;
  height: 41px;
  padding: 0 0 3px 2px;
`;

const ToolGroup = styled.div`
  display: flex;
  align-items: center;
  gap: ${(props) => props.gap || 1}px;
`;

const ToolButton = styled.button`
  display: flex;
  align-items: center;
  justify-content: center;
  gap: 6px;
  height: ${(props) => (props.large ? 28 : 22)}px;
  padding: 0 ${(props) => (props.large ? 9 : 12)}px;
  border: 1px solid #2c2c2c;
  border-radius: 7px;
  background: linear-gradient(#585858, #3c3c3c);
  color: white;
  font-size: ${(props) => (props.large ? 14 : 10)}px;
  font-weight: bold;

  ${(props) =>
    props.primary &&
    css`
      padding: 0 9px;
      border-color: #1010c8;
      background: linear-gradient(#8890f0, #1018d8 40%);
    `}

  ${(props) =>
    props.narrow &&
    css`
      padding: 0 8px;
    `}

  ${(props) =>
    props.dark &&
    css`
      gap: 0;
      border-color: #202020;
      background: #202020;
      font-size: 13px;

      small {
        font-size: 10px;
      }
    `}
`;

const LayoutState = styled.p`
  width: 40px;
  margin: 0 2px 0 0;
  color: #bfa888;
  font-size: 11px;
  line-height: 12px;
`;

const Lookup = styled.label`
  display: flex;
  align-items: center;
  width: 125px;
  height: 18px;
  padding: 0 4px 0 3px;
  background: white;

  input {
    width: 106px;
    padding: 0;
    border: 0;
    background: none;
    font-size: 10px;
  }

  input::placeholder {
    color: #707070;
  }
`;

const Clock = styled.time`
  font-size: 20px;
  font-weight: bold;
`;

const Workspace = styled.main`
  display: grid;
  flex: 1;
  grid-template-columns: 659fr 658fr 710fr;
  gap: 3px;
  padding: 0 3px 1px 0;
`;

const Column = styled.div`
  display: grid;
  min-width: 0;
  grid-template-rows: ${(props) => props.rows};
  gap: 2px;
`;

const LayoutTabs = styled.nav`
  display: flex;
  gap: 7px;
  height: 42px;
  padding-left: 20px;
  border-top: 16px solid #404040;
  background: ${NAVY};
`;

const LayoutTab = styled.button`
  height: 24px;
  padding: 0 9px;
  border: solid #686868;
  border-width: 0 1px 1px;
  border-radius: 0 0 4px 4px;
  background: linear-gradient(${NAVY}, #101828);
  color: white;
  font-size: 16px;
  line-height: 23px;

  ${(props) =>
    props.selected &&
    css`
      border-radius: 0;
      background: #d8d8d8;
      color: black;
    `}

  ${(props) =>
    props.add &&
    css`
      padding: 0 4px;
      font-size: 12px;
    `}
`;

const App = () => (
  <Page>
    <GlobalStyle />
    <Frame>
      <TitleBar>
        <Brand>
          <Logo>IB</Logo>
          <h1>Interactive Brokers Trader Workstation</h1>
          <MenuButton>File</MenuButton>
          <MenuButton>Account</MenuButton>
          <MenuButton>Help</MenuButton>
        </Brand>
        <HeaderTools gap={5}>
          <User>
            <em>DATA</em>
            mastadee
          </User>
          <IconButton aria-label="Settings">
            <WrenchIcon />
          </IconButton>
          <IconButton aria-label="Pin">
            <PinIcon />
          </IconButton>
          <Caret size={3} color="#8b8b8b" />
          <span />
          <IconButton aria-label="Minimize">
            <MinimizeIcon />
          </IconButton>
          <IconButton aria-label="Restore">
            <WindowIcon />
          </IconButton>
          <IconButton aria-label="Close" color="#8b93a8">
            <CrossIcon />
          </IconButton>
        </HeaderTools>
      </TitleBar>

      <Toolbar>
        <ToolGroup>
          <ToolButton primary>
            New Window
            <Caret size={3} />
          </ToolButton>
          <ToolButton>Event Calendar</ToolButton>
          <ToolButton>News</ToolButton>
          <ToolButton>Analyst Research</ToolButton>
          <ToolButton narrow>FYI</ToolButton>
          <ToolButton large>Feedback</ToolButton>
        </ToolGroup>
        <ToolGroup gap={9}>
          <ToolButton dark narrow>
            <small>A</small>A
          </ToolButton>
          <LayoutState>Layout Locked</LayoutState>
          <LockIcon />
          <ToolGroup gap={1}>
            <Lookup>
              <input aria-label="Ticker" placeholder="Help / Ticker Lookup" />
              <SearchIcon />
            </Lookup>
            <ChainIcon color="#55b82c" width={19} height={10} />
          </ToolGroup>
          <PointerIcon />
          <Clock>11:14:37</Clock>
        </ToolGroup>
      </Toolbar>

      <Workspace>
        <Column rows="327fr 318fr 342fr">
          <ChartPanel chart={CHARTS.zn} />
          <ChartPanel chart={CHARTS.zf} />
          <ChartPanel chart={CHARTS.gc} />
        </Column>
        <Column rows="327fr 318fr 342fr">
          <ChartPanel chart={CHARTS.es} />
          <ChartPanel chart={CHARTS.nq} />
          <ChartPanel chart={CHARTS.ym} />
        </Column>
        <Column rows="auto 375fr 456fr">
          <Monitor />
          <ChartPanel chart={CHARTS.esHourly} active />
          <ChartPanel chart={CHARTS.esMinutes} />
        </Column>
      </Workspace>

      <LayoutTabs>
        <LayoutTab>Classic TWS</LayoutTab>
        <LayoutTab selected>Market overview</LayoutTab>
        <LayoutTab>Stocks</LayoutTab>
        <LayoutTab>Mosaic</LayoutTab>
        <LayoutTab>D-30min-5min-1min</LayoutTab>
        <LayoutTab add>+</LayoutTab>
      </LayoutTabs>
    </Frame>
  </Page>
);

export default App;
